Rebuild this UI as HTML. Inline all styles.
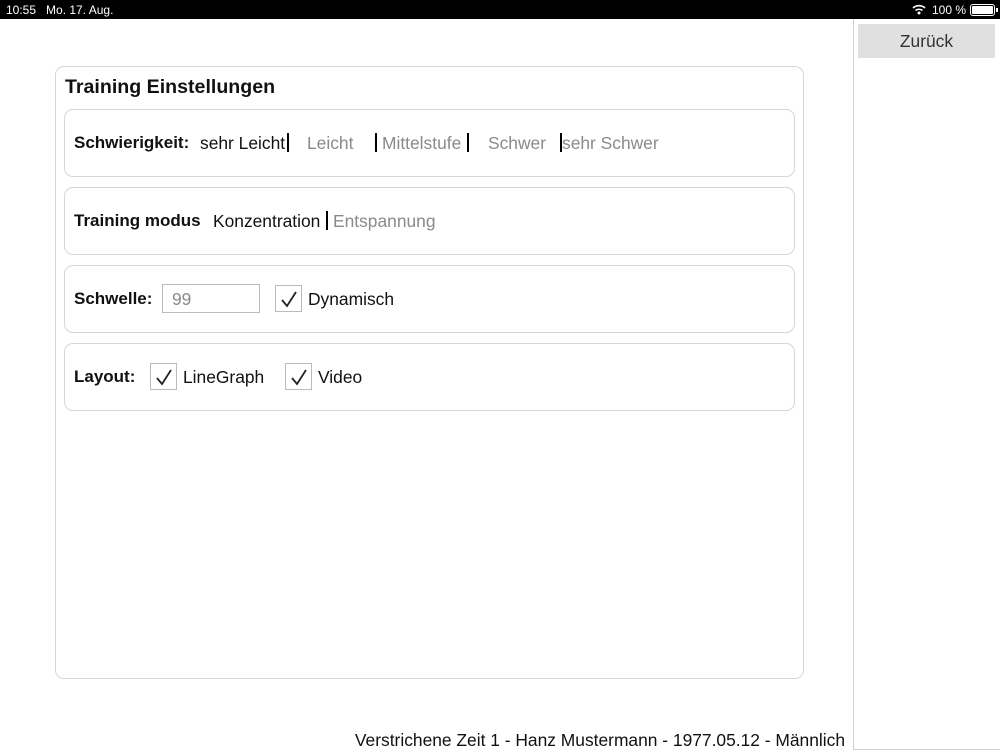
<!DOCTYPE html>
<html><head><meta charset="utf-8"><style>
*{margin:0;padding:0;box-sizing:border-box}
body{width:1000px;height:750px;position:relative;background:#fff;font-family:"Liberation Sans",sans-serif;overflow:hidden;color:#111}
.a{position:absolute;white-space:nowrap}
.sb{position:absolute;left:0;top:0;width:1000px;height:19px;background:#000;color:#fff;font-size:12px}
.card{position:absolute;left:55px;top:66px;width:749px;height:613px;border:1px solid #d6d6d6;border-radius:9px}
.row{position:absolute;left:64px;width:731px;height:68px;border:1px solid #d6d6d6;border-radius:9px}
.t{font-size:17.4px}
.b{font-weight:bold;font-size:17px}
.g{color:#8a8a8a}
.bar{position:absolute;width:2px;height:19px;background:#000}
.cb{position:absolute;width:27px;height:27px;border:1px solid #bbb;background:#fff}
</style></head><body>
<div class="sb"><span class="a" style="left:6px;top:3px">10:55 &nbsp; Mo. 17. Aug.</span>
<svg class="a" style="left:912px;top:4px" width="14" height="11" viewBox="0 0 14 11"><path d="M1 4a9 9 0 0 1 12 0M3.5 6.5a5.5 5.5 0 0 1 7 0" stroke="#fff" stroke-width="1.6" fill="none"/><circle cx="7" cy="9" r="1.5" fill="#fff"/></svg>
<span class="a" style="left:932px;top:3px">100 %</span>
<div class="a" style="left:970px;top:4px;width:25px;height:12px;border:1px solid #fff;border-radius:3px;padding:1px"><div style="width:100%;height:100%;background:#fff;border-radius:1px"></div></div>
<div class="a" style="left:996px;top:8px;width:2px;height:4px;background:#fff"></div>
</div>
<div class="a" style="left:853px;top:19px;width:147px;height:731px;border-left:1px solid #d0d0d0;border-bottom:1px solid #d0d0d0"></div>
<div class="a" style="left:858px;top:24px;width:137px;height:34px;background:#e0e0e0;font-size:17.4px;text-align:center;line-height:34px;color:#333">Zurück</div>
<div class="card"></div>
<div class="a" style="left:65px;top:76px;font-size:19.6px;font-weight:bold">Training Einstellungen</div>
<div class="row" style="top:109px"></div>
<div class="row" style="top:187px"></div>
<div class="row" style="top:265px"></div>
<div class="row" style="top:343px"></div>
<div class="a b" style="left:74px;top:133px">Schwierigkeit:</div>
<div class="a t" style="left:200px;top:133px">sehr Leicht</div>
<div class="bar" style="left:287px;top:133px"></div>
<div class="a t g" style="left:307px;top:133px">Leicht</div>
<div class="bar" style="left:375px;top:133px"></div>
<div class="a t g" style="left:382px;top:133px">Mittelstufe</div>
<div class="bar" style="left:467px;top:133px"></div>
<div class="a t g" style="left:488px;top:133px">Schwer</div>
<div class="bar" style="left:560px;top:133px"></div>
<div class="a t g" style="left:562px;top:133px">sehr Schwer</div>
<div class="a b" style="left:74px;top:211px">Training modus</div>
<div class="a t" style="left:213px;top:211px">Konzentration</div>
<div class="bar" style="left:326px;top:211px"></div>
<div class="a t g" style="left:333px;top:211px">Entspannung</div>
<div class="a b" style="left:74px;top:289px">Schwelle:</div>
<div class="a" style="left:162px;top:284px;width:98px;height:29px;border:1px solid #bbb"></div>
<div class="a t g" style="left:172px;top:289px">99</div>
<div class="cb" style="left:275px;top:285px"></div>
<svg class="a" style="left:279px;top:289px" width="20" height="20"><path d="M3 11l5 6L17 3" stroke="#222" stroke-width="1.8" fill="none"/></svg>
<div class="a t" style="left:308px;top:289px">Dynamisch</div>
<div class="a b" style="left:74px;top:367px">Layout:</div>
<div class="cb" style="left:150px;top:363px"></div>
<svg class="a" style="left:154px;top:367px" width="20" height="20"><path d="M3 11l5 6L17 3" stroke="#222" stroke-width="1.8" fill="none"/></svg>
<div class="a t" style="left:183px;top:367px">LineGraph</div>
<div class="cb" style="left:285px;top:363px"></div>
<svg class="a" style="left:289px;top:367px" width="20" height="20"><path d="M3 11l5 6L17 3" stroke="#222" stroke-width="1.8" fill="none"/></svg>
<div class="a t" style="left:318px;top:367px">Video</div>
<div class="a t" style="right:155px;top:730px">Verstrichene Zeit 1 - Hanz Mustermann - 1977.05.12 - Männlich</div>
</body></html>
